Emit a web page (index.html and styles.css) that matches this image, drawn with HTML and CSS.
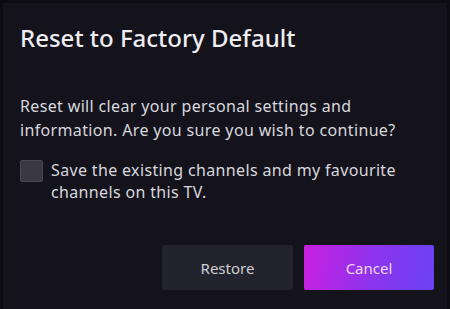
FILE: index.html
```html
<!DOCTYPE html>
<html>
<head>
<meta charset="utf-8">
<link rel="stylesheet" href="styles.css">
</head>
<body>
<div class="dialog">
  <h1 class="title">Reset to Factory Default</h1>
  <p class="message">Reset will clear your personal settings and information. Are you sure you wish to continue?</p>
  <div class="check-row">
    <span class="checkbox"></span>
    <span class="check-label">Save the existing channels and my favourite channels on this TV.</span>
  </div>
  <div class="actions">
    <button class="btn btn-secondary">Restore</button>
    <button class="btn btn-primary">Cancel</button>
  </div>
</div>
</body>
</html>
```
FILE: styles.css
```css
html, body {
  margin: 0;
  padding: 0;
  background: #0c0b12;
  width: 450px;
  height: 309px;
  overflow: hidden;
}
.dialog {
  box-sizing: border-box;
  margin: 3px 0 0 3px;
  width: 444px;
  height: 306px;
  background: #14131c;
  padding: 19px 13px 0 17px;
  font-family: "Noto Sans", sans-serif;
  color: #dcdbe2;
}
.title {
  margin: 0;
  font-size: 24px;
  font-weight: 500;
  line-height: 32px;
  color: #eeedf2;
}
.message {
  margin: 40px 0 0;
  font-size: 16px;
  line-height: 24px;
  letter-spacing: 0.35px;
  max-width: 412px;
  color: #d8d7de;
}
.check-row {
  display: flex;
  margin-top: 17px;
}
.checkbox {
  flex: none;
  box-sizing: border-box;
  width: 23px;
  height: 22px;
  margin-top: 1px;
  background: #3a3943;
  border: 1px solid #4a4953;
  border-radius: 2px;
}
.check-label {
  margin-left: 8px;
  font-size: 16px;
  line-height: 22px;
  letter-spacing: 0.35px;
  max-width: 375px;
  color: #d8d7de;
}
.actions {
  display: flex;
  justify-content: flex-end;
  gap: 11px;
  margin-top: 42px;
}
.btn {
  height: 45px;
  border: none;
  border-radius: 2px;
  font-family: "Noto Sans", sans-serif;
  font-size: 15px;
  color: #cfcfd4;
}
.btn-secondary {
  width: 131px;
  background: #22232c;
}
.btn-primary {
  width: 130px;
  background: linear-gradient(100deg, #c91fe0 0%, #8b35ee 55%, #6a42f2 100%);
  color: #f3d6f8;
}
```
